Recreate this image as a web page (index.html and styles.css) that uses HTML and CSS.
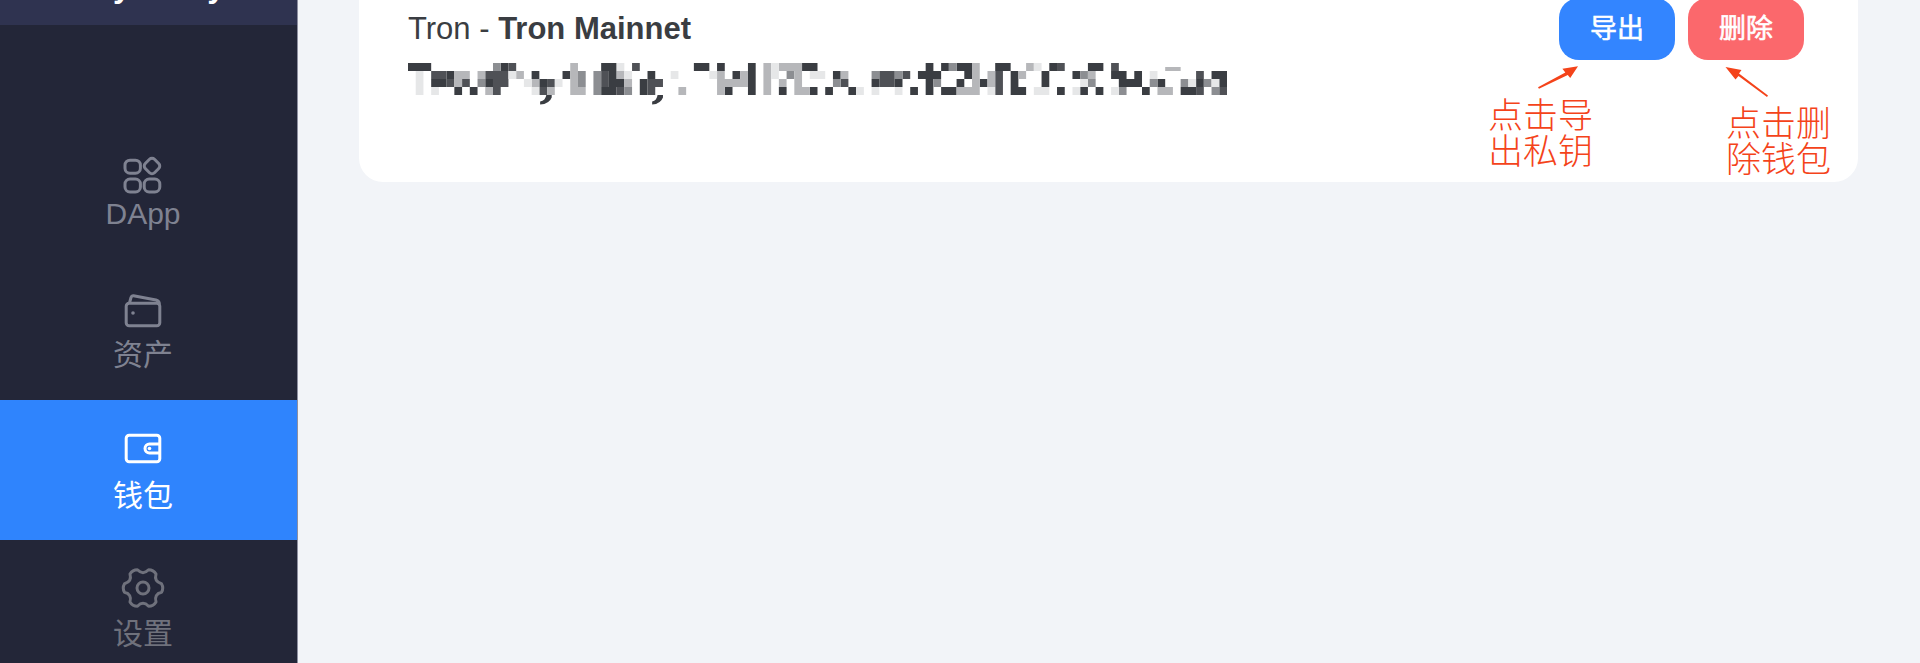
FILE: index.html
```html
<!doctype html>
<html lang="zh">
    <head>
        <title>钱包</title>
        <meta charset="utf-8">
        <link rel="stylesheet" href="styles.css">
    </head>
    <body>
        <div class="sidebar">
            <div class="brand"><div class="brand_name">Key Relay</div></div>

            <div class="nav">
                <div class="nav_item nav_dapp">
                    <svg class="nav_icon" viewBox="0 0 40 40">
                        <rect x="2" y="4.2" width="15.4" height="13" rx="5"/>
                        <rect x="22.5" y="3.5" width="13" height="13" rx="3.5" transform="rotate(45 29 10)"/>
                        <rect x="2" y="23" width="15.4" height="13" rx="5"/>
                        <rect x="21.2" y="23" width="15.6" height="13" rx="5"/>
                    </svg>
                    <span>DApp</span>
                </div>
                <div class="nav_item">
                    <svg class="nav_icon" viewBox="0 0 40 40">
                        <rect x="3.2" y="14.2" width="33.6" height="22.6" rx="3"/>
                        <path d="M6.5 14 L8 8.5 Q8.6 6.5 10.5 6.8 L33 11 Q36 11.8 36.5 15"/>
                        <circle class="dot" cx="10" cy="24" r="1.8"/>
                    </svg>
                    <span>资产</span>
                </div>
                <div class="nav_item active">
                    <svg class="nav_icon" viewBox="0 0 40 40">
                        <rect x="3.2" y="6.2" width="33.6" height="26.6" rx="3"/>
                        <path d="M36.8 15 H26.5 a4.5 4.5 0 0 0 0 9 H36.8"/>
                        <circle class="dot" cx="26.5" cy="19.5" r="1.8"/>
                    </svg>
                    <span>钱包</span>
                </div>
                <div class="nav_item dim">
                    <svg class="nav_icon" viewBox="0 0 40 40">
                        <path d="M38.5 15.7 Q41 20 38.5 24.3 Q30.8 26.25 33 33.9 Q30.5 38.2 25.6 38.2 Q20 32.5 14.4 38.2 Q9.5 38.2 7 33.9 Q9.2 26.25 1.5 24.3 Q-1 20 1.5 15.7 Q9.2 13.75 7 6.1 Q9.5 1.8 14.4 1.8 Q20 7.5 25.6 1.8 Q30.5 1.8 33 6.1 Q30.8 13.75 38.5 15.7z"/>
                        <circle cx="20" cy="20" r="6"/>
                    </svg>
                    <span>设置</span>
                </div>
            </div>
        </div>

        <div class="main">
            <div class="card">
                <div class="wallet">
                    <div class="wallet_name">Tron - <b>Tron Mainnet</b></div>
                    <!-- address is mosaicked in the source, one unit = one mosaic cell -->
                    <svg class="address" viewBox="0 0 106 4" preserveAspectRatio="none">
                        <path fill="#3a3d42" d="M0 0h3v1h-3zM12 0h1v1h-1zM25 0h2v1h-2zM37 0h2v1h-2zM40 0h1v1h-1zM44 0h1v1h-1zM51 0h2v1h-2zM67 0h1v1h-1zM69 0h1v1h-1zM71 0h2v1h-2zM76 0h2v1h-2zM83 0h1v1h-1zM88 0h2v1h-2z
                            M5 1h1v1h-1zM16 1h1v1h-1zM20 1h1v1h-1zM26 1h1v1h-1zM31 1h1v1h-1zM42 1h1v1h-1zM44 1h1v1h-1zM55 1h1v1h-1zM66 1h3v1h-3zM72 1h1v1h-1zM78 1h1v1h-1zM82 1h1v1h-1zM86 1h1v1h-1zM91 1h2v1h-2zM94 1h1v1h-1zM104 1h2v1h-2z
                            M3 2h2v1h-2zM10 2h1v1h-1zM17 2h1v1h-1zM26 2h2v1h-2zM30 2h1v1h-1zM44 2h1v1h-1zM60 2h1v1h-1zM63 2h1v1h-1zM67 2h1v1h-1zM71 2h1v1h-1zM74 2h1v1h-1zM78 2h1v1h-1zM82 2h1v1h-1zM92 2h3v1h-3zM97 2h1v1h-1zM102 2h1v1h-1zM105 2h1v1h-1z
                            M6 3h1v1h-1zM8 3h1v1h-1zM25 3h2v1h-2zM30 3h1v1h-1zM41 3h1v1h-1zM44 3h1v1h-1zM48 3h1v1h-1zM52 3h1v1h-1zM54 3h1v1h-1zM57 3h1v1h-1zM65 3h1v1h-1zM67 3h1v1h-1zM69 3h2v1h-2zM78 3h2v1h-2zM84 3h1v1h-1zM87 3h1v1h-1zM89 3h1v1h-1zM95 3h1v1h-1zM100 3h2v1h-2z
                            M18.6 4 L18.6 4.3 Q18.3 5.1 17.1 5.2 L17.1 4.8 Q17.8 4.7 17.9 4z M33 4 L33 4.3 Q32.7 5.1 31.6 5.2 L31.6 4.8 Q32.2 4.7 32.3 4z"/>
                        <path fill="#4f5156" d="M13 0h1v1h-1zM29 0h1v1h-1zM84 0h1v1h-1zM91 0h1v1h-1z
                            M3 1h2v1h-2zM10 1h3v1h-3zM25 1h1v1h-1zM61 1h2v1h-2zM64 1h1v1h-1zM76 1h1v1h-1zM102 1h1v1h-1z
                            M5 2h1v1h-1zM7 2h1v1h-1zM11 2h2v1h-2zM18 2h1v1h-1zM25 2h1v1h-1zM31 2h2v1h-2zM56 2h1v1h-1zM61 2h2v1h-2zM76 2h1v1h-1z
                            M11 3h1v1h-1zM17 3h1v1h-1zM27 3h1v1h-1zM31 3h1v1h-1zM76 3h1v1h-1zM102 3h1v1h-1zM105 3h1v1h-1z"/>
                        <path fill="#8c8e92" d="M11 0h1v1h-1zM70 0h1v1h-1z
                            M22 1h1v1h-1zM24 1h1v1h-1zM49 1h1v1h-1zM60 1h1v1h-1zM63 1h1v1h-1zM87 1h1v1h-1z
                            M9 2h1v1h-1zM22 2h1v1h-1zM24 2h1v1h-1zM55 2h1v1h-1zM68 2h1v1h-1zM88 2h1v1h-1zM96 2h1v1h-1zM100 2h1v1h-1zM103 2h1v1h-1z
                            M24 3h1v1h-1zM28 3h1v1h-1zM92 3h1v1h-1zM104 3h1v1h-1z"/>
                        <path fill="#b6b7ba" d="M21 0h1v1h-1zM46 0h1v1h-1zM48 0h3v1h-3zM73 0h1v1h-1zM80 0h1v1h-1zM98 .5h2v.5h-2z
                            M6 1h2v1h-2zM9 1h1v1h-1zM14 1h1v1h-1zM21 1h1v1h-1zM27 1h1v1h-1zM40 1h1v1h-1zM43 1h1v1h-1zM46 1h1v1h-1zM50 1h1v1h-1zM56 1h1v1h-1zM73 1h1v1h-1zM75 1h1v1h-1zM79 1h1v1h-1zM88 1h1v1h-1z
                            M6 2h1v1h-1zM16 2h1v1h-1zM21 2h1v1h-1zM28 2h1v1h-1zM40 2h4v1h-4zM46 2h1v1h-1zM48 2h1v1h-1zM50 2h1v1h-1zM73 2h1v1h-1zM75 2h1v1h-1z
                            M10 3h1v1h-1zM18 3h1v1h-1zM21 3h2v1h-2zM35 3h1v1h-1zM40 3h1v1h-1zM46 3h1v1h-1zM50 3h2v1h-2zM71 3h3v1h-3zM97 3h2v1h-2z"/>
                        <path fill="#e6e7e8" d="M27 0h1v1h-1zM47 0h1v1h-1zM81 0h1v1h-1z
                            M1 1h1v1h-1zM13 1h1v1h-1zM28 1h1v1h-1zM34 1h1v1h-1zM39 1h1v1h-1zM47 1h1v1h-1zM52 1h2v1h-2zM96 1h1v1h-1z
                            M1 2h1v1h-1zM15 2h1v1h-1zM19 2h1v1h-1zM87 2h1v1h-1zM101 2h1v1h-1zM104 2h1v1h-1z
                            M1 3h1v1h-1zM3 3h1v1h-1zM16 3h1v1h-1zM58 3h1v1h-1zM60 3h1v1h-1zM63 3h1v1h-1zM75 3h1v1h-1zM81 3h2v1h-2zM86 3h1v1h-1zM91 3h1v1h-1z"/>
                    </svg>
                </div>
                <div class="actions">
                    <div class="btn btn_export">导出</div>
                    <div class="btn btn_delete">删除</div>
                </div>

                <!-- red notes drawn over the screenshot -->
                <svg class="arrow arrow_export" viewBox="0 0 42 24">
                    <path d="M0 22.5 L28 7.5 L25 3.5 L41 1 L33 13 L30.5 10 L1 24z"/>
                </svg>
                <svg class="arrow arrow_delete" viewBox="0 0 44 32">
                    <path d="M42.5 31 L14 10 L11 13.5 L1 1 L17 4 L14.5 7.5 L43.5 29.5z"/>
                </svg>
                <div class="note note_export">点击导<br>出私钥</div>
                <div class="note note_delete">点击删<br>除钱包</div>
            </div>
        </div>
    </body>
</html>
```

FILE: styles.css
```css
html, body {
    height: 100%;
}

body {
    display: flex;
    margin: 0;
    overflow: hidden;
    background: #F2F4F8;
    font-family: 'Liberation Sans', 'Noto Sans CJK SC', sans-serif;
}

.sidebar {
    flex: none;
    width: 297px;
    height: 100%;
    overflow: hidden;
    background: #232638;
    border-right: 1px solid #8D8FA0;
}

.brand {
    height: 25px;
    overflow: hidden;
    background: #2F3350;
}

.brand_name {
    margin-top: -34px;
    color: white;
    font: bold 32px/40px 'Liberation Sans', sans-serif;
    text-align: center;
}

.nav {
    margin-top: 96px;
}

.nav_item {
    display: flex;
    flex-direction: column;
    align-items: center;
    box-sizing: border-box;
    height: 139.5px;
    padding: 28px 11px 0 0;
    color: #7F8291;
    font-size: 30px;
    line-height: 36px;
}

.nav_item span {
    margin-top: 8px;
}

.nav_dapp {
    padding-top: 35px;
}

.nav_dapp span {
    margin-top: 0;
}

.nav_item.active {
    padding-top: 29px;
    background: #2F84FD;
    color: white;
}

.nav_item.active span {
    margin-top: 9px;
}

.nav_item.dim {
    color: #6F717C;
}

.nav_icon {
    flex: none;
    width: 40px;
    height: 40px;
    overflow: visible;
    fill: none;
    stroke: currentColor;
    stroke-width: 3;
    stroke-linejoin: round;
}

.nav_icon .dot {
    fill: currentColor;
    stroke: none;
}

.main {
    flex: 1;
    padding: 0 62px 0 61px;
}

.card {
    position: relative;
    display: flex;
    justify-content: space-between;
    box-sizing: border-box;
    height: 212px;
    margin-top: -30px;
    padding: 28px 54px 0 49px;
    background: white;
    border-radius: 24px;
}

.wallet_name {
    margin-top: 11px;
    color: #3A3D42;
    font-size: 31px;
    line-height: 40px;
}

.address {
    display: block;
    width: 819px;
    height: 32px;
    margin-top: 14px;
    overflow: visible;
}

.actions {
    display: flex;
    gap: 13px;
}

.btn {
    width: 116px;
    height: 62px;
    border-radius: 20px;
    color: white;
    font-size: 27px;
    line-height: 62px;
    -webkit-text-stroke: .6px white;
    text-align: center;
}

.btn_export {
    background: #3385FF;
}

.btn_delete {
    background: #FB686C;
}

.note {
    position: absolute;
    color: #F4431A;
    font-size: 35px;
    font-weight: 300;
    line-height: 36px;
    white-space: nowrap;
}

.note_export {
    left: 1129px;
    top: 128px;
}

.note_delete {
    left: 1367px;
    top: 136px;
}

.arrow {
    position: absolute;
    fill: #F4431A;
}

.arrow_export {
    left: 1179px;
    top: 95px;
    width: 41px;
    height: 24px;
}

.arrow_delete {
    left: 1365px;
    top: 96px;
    width: 45px;
    height: 32px;
}
```
